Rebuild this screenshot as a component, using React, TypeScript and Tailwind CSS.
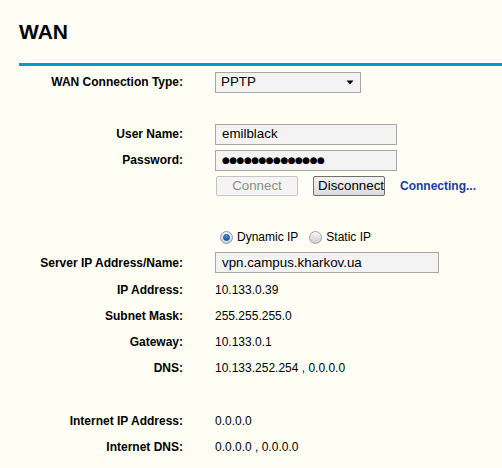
import React from "react";

function Row({
  label,
  h,
  children,
}: {
  label?: string;
  h: string;
  children?: React.ReactNode;
}) {
  return (
    <div className={`grid grid-cols-[183px_1fr] gap-x-[32px] items-center ${h}`}>
      <div className="text-right font-bold text-[12px] leading-none text-black whitespace-nowrap">
        {label}
      </div>
      <div className="flex items-center text-[12px] leading-none text-black whitespace-nowrap">
        {children}
      </div>
    </div>
  );
}

function Radio({ checked }: { checked: boolean }) {
  return checked ? (
    <span className="w-[13px] h-[13px] rounded-full border border-[#8a9aa8] bg-gradient-to-b from-[#eef3f7] to-[#c9d6e0] flex items-center justify-center">
      <span className="w-[7px] h-[7px] rounded-full bg-gradient-to-b from-[#4a9be6] to-[#1457a8] border border-[#174c8c]" />
    </span>
  ) : (
    <span className="w-[13px] h-[13px] rounded-full border border-[#a0a0a0] bg-gradient-to-b from-[#f6f6f6] to-[#cfcfcf]" />
  );
}

export default function App() {
  return (
    <div className="w-[502px] h-[468px] bg-[#fefef4] font-['Liberation_Sans',Arial,sans-serif] text-black overflow-hidden">
      <div className="pl-[19px] pt-[21px] h-[63px]">
        <div className="font-bold text-[21px] leading-none">WAN</div>
      </div>
      <div className="ml-[19px] h-[3px] bg-[#0b98cb]" />
      <div className="pt-[3px]">
        <Row label="WAN Connection Type:" h="h-[26px]">
          <div className="w-[146px] h-[21px] border border-[#a6a6a6] bg-[#f3f3f3] flex items-center pl-[5px] pr-[6px] text-[13.33px]">
            <span className="flex-1">PPTP</span>
            <svg width="8" height="5" viewBox="0 0 8 5">
              <path d="M0.5 0.5 H7.5 L4 4.5 Z" fill="#000" />
            </svg>
          </div>
        </Row>
        <div className="h-[26px]" />
        <Row label="User Name:" h="h-[26px]">
          <div className="w-[182px] h-[21px] border border-[#a6a6a6] bg-[#f3f3f3] flex items-center pl-[6px] text-[13.33px]">
            emilblack
          </div>
        </Row>
        <Row label="Password:" h="h-[26px]">
          <div className="w-[182px] h-[21px] border border-[#a6a6a6] bg-[#f3f3f3] flex items-center pl-[6px] text-[9px] font-['DejaVu_Sans',sans-serif] tracking-[-0.55px]">
            ●●●●●●●●●●●●●●
          </div>
        </Row>
        <Row h="h-[26px]">
          <div className="ml-[1px] w-[82px] h-[20px] rounded-[2px] border border-[#c4c4c4] bg-[#f4f4f4] flex items-center justify-center text-[13.33px] text-[#8d8d8d]">
            Connect
          </div>
          <div className="ml-[15px] w-[72px] h-[20px] rounded-[2px] border border-[#707070] bg-gradient-to-b from-[#f2f2f2] to-[#dcdcdc] flex items-center justify-end pr-[0px] text-[13.33px] overflow-hidden">
            Disconnect
          </div>
          <span className="ml-[15px] font-bold text-[12px] text-[#1a3c9e]">
            Connecting...
          </span>
        </Row>
        <div className="h-[26px]" />
        <Row h="h-[24px]">
          <span className="ml-[5px] flex items-center">
            <Radio checked />
          </span>
          <span className="ml-[4px]">Dynamic IP</span>
          <span className="ml-[11px] flex items-center">
            <Radio checked={false} />
          </span>
          <span className="ml-[4px]">Static IP</span>
        </Row>
        <Row label="Server IP Address/Name:" h="h-[27px]">
          <div className="w-[224px] h-[21px] border border-[#a6a6a6] bg-[#f3f3f3] flex items-center pl-[6px] text-[13.33px]">
            vpn.campus.kharkov.ua
          </div>
        </Row>
        <Row label="IP Address:" h="h-[27px]">
          10.133.0.39
        </Row>
        <Row label="Subnet Mask:" h="h-[26px]">
          255.255.255.0
        </Row>
        <Row label="Gateway:" h="h-[26px]">
          10.133.0.1
        </Row>
        <Row label="DNS:" h="h-[26px]">
          10.133.252.254 , 0.0.0.0
        </Row>
        <div className="h-[27px]" />
        <Row label="Internet IP Address:" h="h-[26px]">
          0.0.0.0
        </Row>
        <Row label="Internet DNS:" h="h-[26px]">
          0.0.0.0 , 0.0.0.0
        </Row>
      </div>
    </div>
  );
}
